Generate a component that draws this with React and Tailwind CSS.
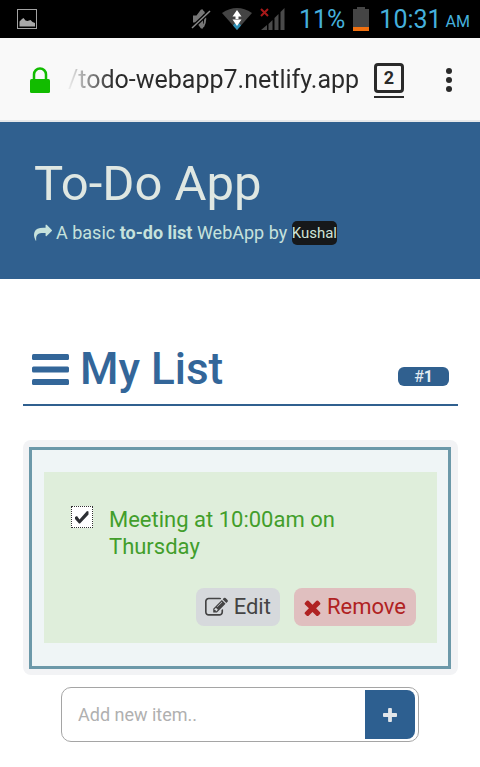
import { useState } from "react";

const ICONS = {
  share:
    "M1792 640q0 26-19 45l-512 512q-19 19-45 19t-45-19-19-45v-256h-224q-98 0-175.5 6t-154 21.5-133 42.5-105.5 69.5-80 101-48.5 138.5-17.5 181q0 55 5 123 0 6 2.5 23.5t2.5 26.5q0 15-8.5 25t-23.5 10q-16 0-28-17-7-9-13-22t-13.5-30-10.5-24q-127-285-127-451 0-199 53-333 162-403 875-403h224v-256q0-26 19-45t45-19 45 19l512 512q19 19 19 45z",
  edit:
    "M888 1184l116-116-152-152-116 116v56h96v96h56zm440-720q-16-16-33 1l-350 350q-17 17-1 33t33-1l350-350q17-17 1-33zm80 594v190q0 119-84.5 203.5t-203.5 84.5h-832q-119 0-203.5-84.5t-84.5-203.5v-832q0-119 84.5-203.5t203.5-84.5h832q63 0 117 25 15 7 18 23 3 17-9 29l-49 49q-14 14-32 8-23-6-45-6h-832q-66 0-113 47t-47 113v832q0 66 47 113t113 47h832q66 0 113-47t47-113v-126q0-13 9-22l64-64q15-15 35-7t20 29zm-96-738l288 288-672 672h-288v-288zm444 132l-92 92-288-288 92-92q28-28 68-28t68 28l152 152q28 28 28 68t-28 68z",
  times:
    "M1490 1322q0 40-28 68l-136 136q-28 28-68 28t-68-28l-294-294-294 294q-28 28-68 28t-68-28l-136-136q-28-28-28-68t28-68l294-294-294-294q-28-28-28-68t28-68l136-136q28-28 68-28t68 28l294 294 294-294q28-28 68-28t68 28l136 136q28 28 28 68t-28 68l-294 294 294 294q28 28 28 68z",
  plus:
    "M1600 736v192q0 40-28 68t-68 28h-416v416q0 40-28 68t-68 28h-192q-40 0-68-28t-28-68v-416h-416q-40 0-68-28t-28-68v-192q0-40 28-68t68-28h416v-416q0-40 28-68t68-28h192q40 0 68 28t28 68v416h416q40 0 68 28t28 68z",
};

function Icon({ name, viewBox = "0 0 1792 1792", className }) {
  return (
    <svg viewBox={viewBox} className={className} fill="currentColor" aria-hidden="true">
      <path d={ICONS[name]} />
    </svg>
  );
}

function StatusBar() {
  return (
    <div className="flex h-[38px] items-center justify-between bg-black pl-[17px] pr-2.5 text-[#45b0dc]">
      <svg viewBox="0 0 20 20" className="h-5 w-5" aria-hidden="true">
        <rect x="0.5" y="0.5" width="19" height="19" fill="none" stroke="#a3a3a3" />
        <path d="M2.500 17.500v-5l2.500-2.500 1.500-1 2 2.500 2 .5 3-1 2 2 2.500 1v3.500z" fill="#a8a8a8" />
      </svg>
      <div className="flex items-center">
        <svg viewBox="0 0 20 22" className="mr-[11px] h-[22px] w-5" aria-hidden="true">
          <path d="M2 7.500h3.500L10 1.500h2v19h-2l-4.500-6H2z" fill="#767676" />
          <path d="M12 3q4.500 8 0 16" fill="none" stroke="#767676" strokeWidth="2" />
          <path d="M1 20L19 3" stroke="#000" strokeWidth="4" />
          <path d="M1 20L19 3" stroke="#8a8a8a" strokeWidth="1.500" />
        </svg>
        <svg viewBox="0 0 30 24" className="mr-2 h-6 w-[30px]" aria-hidden="true">
          <path d="M0 6Q15-4 30 6L15 23z" fill="#444" />
          <path d="M11 18.500L15 23l4-4.500-1.500-2h-5z" fill="#2f8fb5" />
          <path d="M15 3l4.500 6.500h-9zM15 19l4.500-6.500h-9zM13.500 9h3v4h-3z" fill="#fff" />
        </svg>
        <svg viewBox="0 0 25 24" className="mr-3.5 h-6 w-[25px]" aria-hidden="true">
          <path d="M1 23l6-5v5zM8.500 17l4-4v10h-4zM14.500 11l4-4v16h-4zM20.500 5l4-4v22h-4z" fill="#4a4a4a" />
          <path d="M1 2l7 7M8 2L1 9" stroke="#a81919" strokeWidth="2" />
        </svg>
        <span className="mr-2 text-[25px] leading-none">11%</span>
        <svg viewBox="0 0 16 24" className="mr-2.5 h-6 w-4" aria-hidden="true">
          <path d="M4 0h8v2h4v22H0V2h4z" fill="#454545" />
          <path d="M0 20h16v4H0z" fill="#f07010" />
        </svg>
        <span className="text-[25px] leading-none">10:31</span>
        <span className="ml-1 pt-1.5 text-base leading-none">AM</span>
      </div>
    </div>
  );
}

function AddressBar() {
  return (
    <div className="flex h-[84px] items-center border-b-2 border-[#e6e8ea] bg-[#f9f9f9] pl-[30px] pr-7 pt-0.5 text-[#2a2a2a]">
      <svg viewBox="0 0 20 26" className="mr-[18px] h-[26px] w-5 shrink-0" aria-hidden="true">
        <rect y="12" width="20" height="14" rx="1.500" fill="#12bc00" />
        <path d="M4 13V7.500a6 6 0 0 1 12 0V13" fill="none" stroke="#12bc00" strokeWidth="2.500" />
      </svg>
      <span className="min-w-0 flex-1 whitespace-nowrap bg-linear-to-r from-[#f0f0f0] to-[#2a2a2a] to-15% bg-clip-text text-[25px] leading-8 text-transparent">
        /todo-webapp7.netlify.app
      </span>
      <button type="button" aria-label="Open tabs" className="shrink-0 border-b-2 border-[#2a2a2a] pb-[3px]">
        <span className="flex h-[30px] w-[30px] items-center justify-center rounded border-3 border-[#2a2a2a] text-lg font-bold leading-none">
          2
        </span>
      </button>
      <button type="button" aria-label="Menu" className="ml-[42px] flex shrink-0 flex-col gap-[3px]">
        <span className="h-1.5 w-1.5 rounded-full bg-[#2a2a2a]" />
        <span className="h-1.5 w-1.5 rounded-full bg-[#2a2a2a]" />
        <span className="h-1.5 w-1.5 rounded-full bg-[#2a2a2a]" />
      </button>
    </div>
  );
}

function Header() {
  return (
    <header className="bg-[#30608f] px-[34px] pb-[34px] pt-[34px]">
      <h1 className="text-[49px] leading-[56px] text-[#dfe7e2]">To-Do App</h1>
      <p className="mt-[9px] flex items-center whitespace-pre text-lg leading-6 text-[#c6e2dc]">
        <Icon name="share" className="mr-1 h-[18px] w-[18px]" />
        A basic <b className="font-bold">to-do list</b> WebApp by{" "}
        <a href="#kushal" className="rounded-[5px] bg-[#16181a] text-[15px] leading-6 text-[#cfe3d8]">
          Kushal
        </a>
      </p>
    </header>
  );
}

function TodoItem({ text }) {
  const [done, setDone] = useState(true);
  return (
    <li className="bg-[#dfeedb] pb-[17px] pl-[27px] pr-[21px] pt-[34px]">
      <label className="flex gap-4 text-[22px] leading-[27px] text-[#429e2b]">
        <span className="grid h-[22px] w-[22px] shrink-0">
          <input
            type="checkbox"
            checked={done}
            onChange={(e) => setDone(e.target.checked)}
            className="col-start-1 row-start-1 appearance-none border border-dotted border-[#333] bg-white"
          />
          {done && (
            <svg viewBox="0 0 22 22" className="pointer-events-none col-start-1 row-start-1" aria-hidden="true">
              <path d="M4 11l2-1 2.500 3.500L16 5l1.500.500v3L9 17.500H8L4 13z" fill="#2c2f33" />
            </svg>
          )}
        </span>
        <span>{text}</span>
      </label>
      <div className="mt-7 flex justify-end gap-3.5 text-[22px] leading-[38px]">
        <button type="button" className="flex items-center gap-1.5 rounded-lg bg-[#d6d9dc] px-[9px] text-[#444]">
          <Icon name="edit" className="h-[23px] w-[23px]" />
          Edit
        </button>
        <button type="button" className="flex items-center gap-1.5 rounded-lg bg-[#e0bfbf] px-2.5 text-[#b02222]">
          <Icon name="times" viewBox="256 256 1280 1280" className="h-[17px] w-[17px]" />
          Remove
        </button>
      </div>
    </li>
  );
}

export default function App() {
  return (
    <div className="min-h-screen bg-white font-[Roboto,sans-serif]">
      <StatusBar />
      <AddressBar />
      <Header />
      <main className="pb-6 pl-[23px] pr-[22px] pt-[62px]">
        <div className="flex items-end justify-between border-b-2 border-[#30608f] pb-[7px] pl-[9px] pr-[9px]">
          <h2 className="flex items-center gap-[11px] text-[44px] font-medium leading-[56px] text-[#336699]">
            <svg viewBox="0 0 37 31" className="h-[31px] w-[37px]" fill="currentColor" aria-hidden="true">
              <rect width="37" height="6" rx="1.500" />
              <rect y="12.500" width="37" height="6" rx="1.500" />
              <rect y="25" width="37" height="6" rx="1.500" />
            </svg>
            My List
          </h2>
          <span className="mb-[11px] rounded-md bg-[#30608f] px-4 text-base leading-[19px] text-[#e3ecf3]">
            #<b>1</b>
          </span>
        </div>
        <div className="mt-[34px] rounded-lg bg-[#f2f3f5] px-[7px] pb-1.5 pl-1.5 pt-[7px]">
          <ul className="border-3 border-[#6c99a9] bg-[#eff5f6] pb-[23px] pl-3 pr-[11px] pt-[22px]">
            <TodoItem text="Meeting at 10:00am on Thursday" />
          </ul>
        </div>
        <form
          onSubmit={(e) => e.preventDefault()}
          className="ml-[38px] mr-[39px] mt-3 flex h-[55px] rounded-[10px] border border-[#a5a5a5] bg-white p-0.5 pr-[3px]"
        >
          <input
            type="text"
            aria-label="New item"
            placeholder="Add new item.."
            className="min-w-0 flex-1 bg-transparent pl-3.5 text-lg outline-none placeholder:text-[#b0b0b0]"
          />
          <button
            type="submit"
            aria-label="Add item"
            className="flex w-[50px] items-center justify-center rounded-r-lg bg-[#2d5f90] text-[#e2e6ea]"
          >
            <Icon name="plus" viewBox="192 128 1408 1408" className="h-3.5 w-3.5" />
          </button>
        </form>
      </main>
    </div>
  );
}
